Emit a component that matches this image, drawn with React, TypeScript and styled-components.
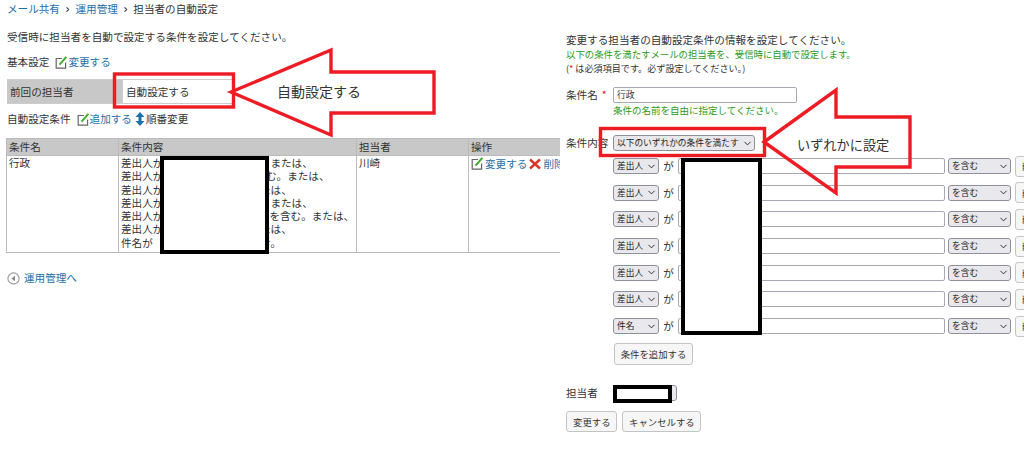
import { ChevronDown, ChevronRight } from "lucide-react";
import styled, { createGlobalStyle } from "styled-components";

const GlobalStyle = createGlobalStyle`
  html, body {
    margin: 0;
    padding: 0;
    background: #fff;
    overflow: hidden;
  }
  body {
    font-family: "Noto Sans CJK JP", "Noto Sans", sans-serif;
    font-size: 10.6px;
    line-height: 14px;
    color: #333;
  }
`;

const Page = styled.div`
  position: relative;
  display: flex;
  width: 1024px;
  height: 453px;
  overflow: hidden;
`;

const LeftPanel = styled.section`
  width: 560px;
  flex: none;
  overflow: hidden;
  padding: 2px 0 0 7px;
  box-sizing: border-box;
`;

const RightPanel = styled.section`
  flex: 1;
  min-width: 0;
  padding: 33px 0 0 6px;
`;

const Breadcrumb = styled.nav`
  display: flex;
  align-items: center;
  gap: 4px;
`;

const Link = styled.a`
  color: #1f6fa8;
`;

const Sep = styled.span`
  display: flex;
  justify-content: center;
  width: 7.5px;
  color: #445;
`;

const Para = styled.p<{ $top?: number; $color?: string; $size?: number }>`
  margin: ${(p) => p.$top ?? 0}px 0 0;
  color: ${(p) => p.$color ?? "inherit"};
  font-size: ${(p) => p.$size ?? 10.6}px;
  white-space: nowrap;
`;

const Heading = styled.div<{ $top: number }>`
  display: flex;
  align-items: center;
  margin-top: ${(p) => p.$top}px;
`;

const HeadingLabel = styled.span`
  margin-right: 6px;
`;

const SettingRow = styled.div`
  display: flex;
  align-items: stretch;
  height: 23px;
  margin-top: 10px;
  border: 1px solid #ccc;
  border-width: 1px 0 1px 0;
  width: 228px;
`;

const SettingLabel = styled.div`
  width: 115px;
  padding-left: 3px;
  background: #c8c8c8;
  display: flex;
  align-items: center;
  box-sizing: border-box;
`;

const SettingValue = styled.div`
  flex: 1;
  padding-left: 3px;
  display: flex;
  align-items: center;
  border-left: 1px solid #ccc;
`;

const Table = styled.table`
  table-layout: fixed;
  border-collapse: collapse;
  width: 570px;
  margin: 12px 0 0 -1px;

  th, td {
    border: 1px solid #bbb;
    padding: 0 2px;
    text-align: left;
    vertical-align: top;
    font-weight: 400;
  }
  th {
    background: #c8c8c8;
    height: 16px;
    line-height: 16px;
  }
  td {
    height: 96px;
    line-height: 13.3px;
  }
`;

const Line = styled.div`
  display: flex;
  white-space: nowrap;
`;

const Gap = styled.span<{ $w: number }>`
  display: inline-block;
  width: ${(p) => p.$w}px;
  flex: none;
`;

const Actions = styled.div`
  display: flex;
  align-items: center;
  gap: 1px;
  padding-top: 1px;
  white-space: nowrap;
`;

const BackLink = styled.div`
  display: flex;
  align-items: center;
  gap: 4px;
  margin-top: 18px;
`;

const FormRow = styled.div<{ $top: number }>`
  display: flex;
  align-items: flex-start;
  margin-top: ${(p) => p.$top}px;
`;

const FieldLabel = styled.div`
  width: 47px;
  flex: none;
  line-height: 15px;
  white-space: nowrap;
`;

const Required = styled.span<{ $gap?: number }>`
  color: #e02020;
  margin-left: ${(p) => p.$gap ?? 0}px;
`;

const Input = styled.div<{ $w: number }>`
  width: ${(p) => p.$w}px;
  height: 16px;
  box-sizing: border-box;
  flex: none;
  border: 1px solid #a8a8b4;
  border-radius: 2px;
  background: #fff;
  padding-left: 3px;
  line-height: 14px;
  font-size: 8.8px;
`;

const Select = styled.div<{ $w: number; $left?: number }>`
  width: ${(p) => p.$w}px;
  height: 16px;
  margin-left: ${(p) => p.$left ?? 0}px;
  flex: none;
  box-sizing: border-box;
  display: flex;
  align-items: center;
  justify-content: space-between;
  padding: 0 1px 0 3px;
  background: #e9e9ed;
  border: 1px solid #8f8f9d;
  border-radius: 3px;
  font-size: 8.7px;
  white-space: nowrap;
  color: #222;

  svg {
    flex: none;
  }
`;

const Conditions = styled.div`
  display: flex;
  flex-direction: column;
  gap: 10.7px;
  margin: 7px 0 0 47px;
`;

const ConditionRow = styled.div`
  display: flex;
  align-items: center;
  height: 16px;
`;

const Ga = styled.span`
  width: 19px;
  flex: none;
  text-align: center;
`;

const SmallButton = styled.button<{ $w?: number }>`
  height: 21px;
  width: ${(p) => (p.$w ? `${p.$w}px` : "auto")};
  font: inherit;
  font-size: 9.4px;
  color: #333;
  background: #f6f6f6;
  border: 1px solid #c4c4c4;
  border-radius: 3px;
  padding: 0 6px;
  white-space: nowrap;
  flex: none;
`;

const RowButton = styled(SmallButton)`
  margin-left: 4px;
`;

const AddButton = styled(SmallButton)`
  margin: 9px 0 0 48px;
  display: block;
  height: 22px;
  padding: 0;
`;

const ButtonRow = styled.div`
  display: flex;
  gap: 5px;
  margin-top: 10px;
`;

const Redaction = styled.div<{ $x: number; $y: number; $w: number; $h: number; $b: number }>`
  position: absolute;
  left: ${(p) => p.$x}px;
  top: ${(p) => p.$y}px;
  width: ${(p) => p.$w}px;
  height: ${(p) => p.$h}px;
  border: ${(p) => p.$b}px solid #000;
  background: #fff;
  box-sizing: border-box;
`;

const Annotations = styled.svg`
  position: absolute;
  inset: 0;
  width: 1024px;
  height: 453px;
  pointer-events: none;
`;

const Callout = styled.div<{ $x: number; $y: number; $size: number }>`
  position: absolute;
  left: ${(p) => p.$x}px;
  top: ${(p) => p.$y}px;
  font-size: ${(p) => p.$size}px;
  line-height: 20px;
  color: #333;
  white-space: nowrap;
`;

function EditIcon() {
  return (
    <svg width="13" height="13" viewBox="0 0 13 13" style={{ flex: "none" }}>
      <path d="M7 2.5H1.2v9.6h9.4V6.5" fill="none" stroke="#666" strokeWidth="1.2" />
      <path d="M4.5 8.6 11.4.8" stroke="#3fae2a" strokeWidth="2" fill="none" />
    </svg>
  );
}

function DeleteIcon() {
  return (
    <svg width="12" height="12" viewBox="0 0 12 12" style={{ flex: "none", margin: "0 1px" }}>
      <path d="M1 1.5 11 10.5M11 1.5 1 10.5" stroke="#d8352a" strokeWidth="2.4" fill="none" />
    </svg>
  );
}

function SortIcon() {
  return (
    <svg width="10" height="14" viewBox="0 0 10 14" style={{ flex: "none", margin: "0 1px 0 3px" }}>
      <path d="M5 0 9.5 5H6.5V9H9.5L5 14 .5 9H3.5V5H.5Z" fill="#1f6fa8" />
    </svg>
  );
}

function BackIcon() {
  return (
    <svg width="13" height="13" viewBox="0 0 13 13" style={{ flex: "none" }}>
      <circle cx="6.5" cy="6.5" r="5.6" fill="#fff" stroke="#999" strokeWidth="1.1" />
      <path d="M8 3.8V9.2L4.4 6.5Z" fill="#888" />
    </svg>
  );
}

const conditions = ["差出人", "差出人", "差出人", "差出人", "差出人", "差出人", "件名"];

export default function App() {
  return (
    <Page>
      <GlobalStyle />
      <LeftPanel>
        <Breadcrumb>
          <Link>メール共有</Link>
          <Sep>
            <ChevronRight size={9} strokeWidth={3.5} />
          </Sep>
          <Link>運用管理</Link>
          <Sep>
            <ChevronRight size={9} strokeWidth={3.5} />
          </Sep>
          <span>担当者の自動設定</span>
        </Breadcrumb>
        <Para $top={14}>受信時に担当者を自動で設定する条件を設定してください。</Para>
        <Heading $top={11}>
          <HeadingLabel>基本設定</HeadingLabel>
          <EditIcon />
          <Link>変更する</Link>
        </Heading>
        <SettingRow>
          <SettingLabel>前回の担当者</SettingLabel>
          <SettingValue>自動設定する</SettingValue>
        </SettingRow>
        <Heading $top={8}>
          <HeadingLabel>自動設定条件</HeadingLabel>
          <EditIcon />
          <Link>追加する</Link>
          <SortIcon />
          <span>順番変更</span>
        </Heading>
        <Table>
          <colgroup>
            <col style={{ width: 112 }} />
            <col style={{ width: 238 }} />
            <col style={{ width: 112 }} />
            <col />
          </colgroup>
          <thead>
            <tr>
              <th>条件名</th>
              <th>条件内容</th>
              <th>担当者</th>
              <th>操作</th>
            </tr>
          </thead>
          <tbody>
            <tr>
              <td>行政</td>
              <td>
                <Line>差出人が<Gap $w={107} />または、</Line>
                <Line>差出人が<Gap $w={92} />含む。または、</Line>
                <Line>差出人が<Gap $w={86} />または、</Line>
                <Line>差出人が<Gap $w={107} />または、</Line>
                <Line>差出人が<Gap $w={106} />を含む。または、</Line>
                <Line>差出人が<Gap $w={86} />または、</Line>
                <Line>件名が<Gap $w={86} />を含む。</Line>
              </td>
              <td>川崎</td>
              <td>
                <Actions>
                  <EditIcon />
                  <Link>変更する</Link>
                  <DeleteIcon />
                  <Link>削除する</Link>
                </Actions>
              </td>
            </tr>
          </tbody>
        </Table>
        <BackLink>
          <BackIcon />
          <Link>運用管理へ</Link>
        </BackLink>
      </LeftPanel>

      <RightPanel>
        <Para>変更する担当者の自動設定条件の情報を設定してください。</Para>
        <Para $color="#2b9a1c" $size={9.4}>以下の条件を満たすメールの担当者を、受信時に自動で設定します。</Para>
        <Para $size={9.1}>
          (<Required>*</Required> は必須項目です。必ず設定してください。)
        </Para>
        <FormRow $top={12}>
          <FieldLabel>
            条件名<Required $gap={4}>*</Required>
          </FieldLabel>
          <div>
            <Input $w={184}>行政</Input>
            <Para $color="#2b9a1c" $size={9.5}>条件の名前を自由に指定してください。</Para>
          </div>
        </FormRow>
        <FormRow $top={18}>
          <FieldLabel>条件内容</FieldLabel>
          <Select $w={142}>
            以下のいずれかの条件を満たす
            <ChevronDown size={11} strokeWidth={2} />
          </Select>
        </FormRow>
        <Conditions>
          {conditions.map((name, i) => (
            <ConditionRow key={i}>
              <Select $w={46}>
                {name}
                <ChevronDown size={11} strokeWidth={2} />
              </Select>
              <Ga>が</Ga>
              <Input $w={267} />
              <Select $w={63} $left={3}>
                を含む
                <ChevronDown size={11} strokeWidth={2} />
              </Select>
              <RowButton>削除する</RowButton>
            </ConditionRow>
          ))}
        </Conditions>
        <AddButton $w={79}>条件を追加する</AddButton>
        <FormRow $top={20}>
          <FieldLabel>担当者</FieldLabel>
          <Select $w={64} />
        </FormRow>
        <ButtonRow>
          <SmallButton $w={51}>変更する</SmallButton>
          <SmallButton $w={79}>キャンセルする</SmallButton>
        </ButtonRow>
      </RightPanel>

      <Redaction $x={160} $y={156} $w={109} $h={98} $b={4} />
      <Redaction $x={681} $y={158} $w={81} $h={177} $b={4} />
      <Redaction $x={613} $y={385} $w={59} $h={18} $b={4} />

      <Annotations viewBox="0 0 1024 453">
        <g fill="none" stroke="#ed1c24" strokeWidth="3.4">
          <rect x="114.5" y="74" width="119" height="33" />
          <path d="M231 92 331 50V72H434V113H331V135Z" />
          <rect x="600.5" y="128.5" width="164" height="27" />
          <path d="M764 142 836 90V117H910V167H836V193Z" />
        </g>
      </Annotations>
      <Callout $x={277} $y={81} $size={14}>自動設定する</Callout>
      <Callout $x={797} $y={135} $size={13.2}>いずれかに設定</Callout>
    </Page>
  );
}
